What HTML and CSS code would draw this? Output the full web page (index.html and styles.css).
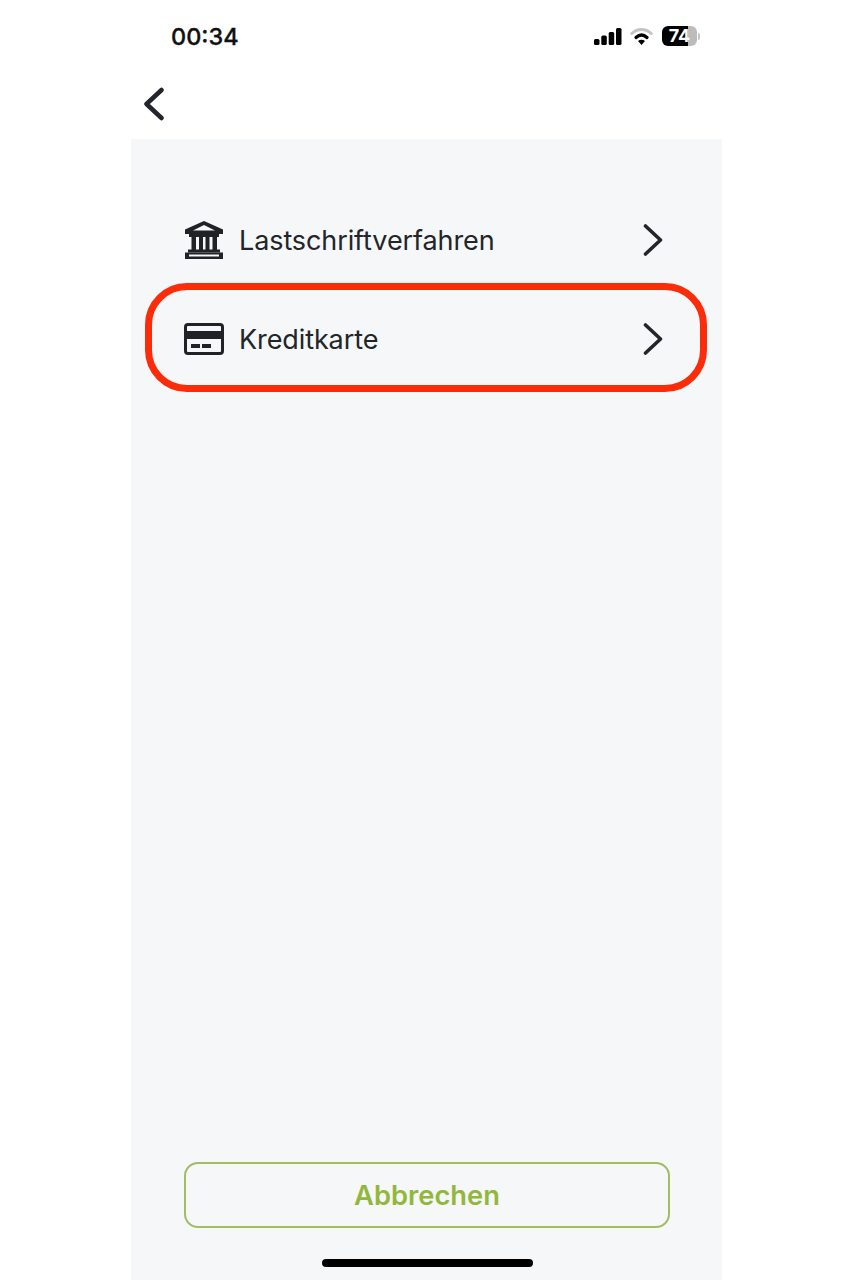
FILE: index.html
```html
<!DOCTYPE html>
<html lang="de">
<head>
<meta charset="utf-8">
<title>Zahlungsart</title>
<link rel="stylesheet" href="styles.css">
</head>
<body>
<div class="phone">
  <div class="status">
    <span class="time">00:34</span>
    <div class="status-icons">
      <svg class="signal" width="28" height="17" viewBox="0 0 28 17"><rect x="0" y="11" width="5.500" height="6" rx="1.500"/><rect x="7.300" y="7.500" width="5.500" height="9.500" rx="1.500"/><rect x="14.700" y="4" width="5.500" height="13" rx="1.500"/><rect x="22" y="0" width="5.500" height="17" rx="1.500"/></svg>
      <svg class="wifi" width="23" height="18" viewBox="0 0 23 18"><path d="M1.800 6.500C7.500 1.200 15.500 1.200 21.200 6.500" fill="none" stroke="#c4c4c4" stroke-width="3" stroke-linecap="round"/><path d="M6 10.500C9.500 7.300 13.500 7.300 17 10.500" fill="none" stroke="#000" stroke-width="3.200" stroke-linecap="round"/><path d="M11.500 18L8 14C10.200 12.200 12.800 12.200 15 14Z" fill="#000"/></svg>
      <div class="battery"><div class="battery-body"><span class="battery-level">74</span></div><div class="battery-cap"></div></div>
    </div>
  </div>
  <div class="nav">
    <svg width="22" height="34" viewBox="0 0 22 34"><path d="M18.500 3L3.500 17L18.500 31" fill="none" stroke="#222529" stroke-width="4.500" stroke-linecap="round" stroke-linejoin="round"/></svg>
  </div>
  <main class="content">
    <ul class="list">
      <li class="row">
        <svg class="row-icon" width="40" height="38" viewBox="0 0 40 38"><path d="M20 0L39 8.500V13H1V8.500Z" fill="#1f2226"/><path d="M20 4L31 9.500H9Z" fill="#f5f7f9"/><rect x="5" y="13" width="30" height="3" fill="#1f2226"/><rect x="7.500" y="16" width="4.500" height="14" fill="#1f2226"/><rect x="15" y="16" width="4" height="14" fill="#1f2226"/><rect x="21.500" y="16" width="4" height="14" fill="#1f2226"/><rect x="28.500" y="16" width="4.500" height="14" fill="#1f2226"/><rect x="4" y="28.500" width="32" height="3" fill="#1f2226"/><path d="M1 31.500H39V38H1Z" fill="#1f2226"/><rect x="5" y="33.500" width="30" height="2" fill="#f5f7f9"/></svg>
        <span class="row-label">Lastschriftverfahren</span>
        <svg class="chevron" width="20" height="32" viewBox="0 0 20 32"><path d="M2.500 2L17.500 16L2.500 30" fill="none" stroke="#222529" stroke-width="3.600" stroke-linecap="round" stroke-linejoin="round"/></svg>
      </li>
      <li class="row">
        <svg class="row-icon" width="40" height="32" viewBox="0 0 40 32"><rect x="1.500" y="1.500" width="37" height="29" rx="2.500" fill="none" stroke="#1f2226" stroke-width="3"/><rect x="2" y="8" width="36" height="8" fill="#1f2226"/><rect x="7" y="21" width="9" height="4" fill="#1f2226"/><rect x="18" y="21" width="9" height="4" fill="#1f2226"/></svg>
        <span class="row-label">Kreditkarte</span>
        <svg class="chevron" width="20" height="32" viewBox="0 0 20 32"><path d="M2.500 2L17.500 16L2.500 30" fill="none" stroke="#222529" stroke-width="3.600" stroke-linecap="round" stroke-linejoin="round"/></svg>
      </li>
    </ul>
    <div class="highlight"></div>
    <div class="footer">
      <button class="cancel" type="button">Abbrechen</button>
      <div class="home-indicator"></div>
    </div>
  </main>
</div>
</body>
</html>
```

FILE: styles.css
```css
* { box-sizing: border-box; }
html, body { margin: 0; padding: 0; background: #fff; }
body { font-family: Inter, "Liberation Sans", sans-serif; color: #222529; }
.phone {
  width: 591px;
  height: 1280px;
  margin-left: 131px;
  display: flex;
  flex-direction: column;
}
.status {
  height: 72px;
  display: flex;
  align-items: center;
  justify-content: space-between;
  padding: 0 22px 0 40px;
}
.time { font-size: 23.500px; font-weight: 500; color: #111; -webkit-text-stroke: 0.3px #111; }
.status-icons { display: flex; align-items: center; gap: 8px; }
.signal { fill: #000; display: block; }
.wifi { display: block; }
.battery { display: flex; align-items: center; gap: 1px; margin-left: 1px; }
.battery-body {
  width: 35px;
  height: 20px;
  border-radius: 6px;
  background: linear-gradient(to right, #000 0 75%, #bcbcbc 75% 100%);
  display: flex;
  align-items: center;
  justify-content: center;
}
.battery-level { color: #fff; font-size: 18px; font-weight: 700; line-height: 1; }
.battery-cap { width: 2px; height: 7px; background: #c4c4c4; border-radius: 0 2px 2px 0; }
.nav {
  height: 67px;
  padding: 15px 0 0 12px;
}
.nav svg { display: block; }
.content {
  flex: 1;
  position: relative;
  background: #f5f7f9;
  display: flex;
  flex-direction: column;
}
.list {
  list-style: none;
  margin: 0;
  padding: 51px 0 0;
}
.row {
  height: 99px;
  display: flex;
  align-items: center;
  padding: 0 59px 0 53px;
}
.row-icon { display: block; flex: none; }
.row-label { flex: 1; margin-left: 15px; padding-top: 3px; font-size: 27px; letter-spacing: -0.1px; line-height: 1.2; }
.chevron { display: block; flex: none; }
.highlight {
  position: absolute;
  left: 14px;
  top: 144px;
  width: 562px;
  height: 109px;
  border: 7px solid #fb2c0a;
  border-radius: 42px;
}
.footer {
  margin-top: auto;
  padding: 0 52px 13px 53px;
  display: flex;
  flex-direction: column;
  align-items: center;
}
.cancel {
  width: 100%;
  height: 66px;
  border: 2px solid #a2bc62;
  border-radius: 14px;
  background: transparent;
  color: #93b73c;
  font-family: inherit;
  font-size: 27.300px;
  font-weight: 600;
}
.home-indicator {
  width: 211px;
  height: 8px;
  margin-top: 31px;
  border-radius: 4px;
  background: #000;
}
```
